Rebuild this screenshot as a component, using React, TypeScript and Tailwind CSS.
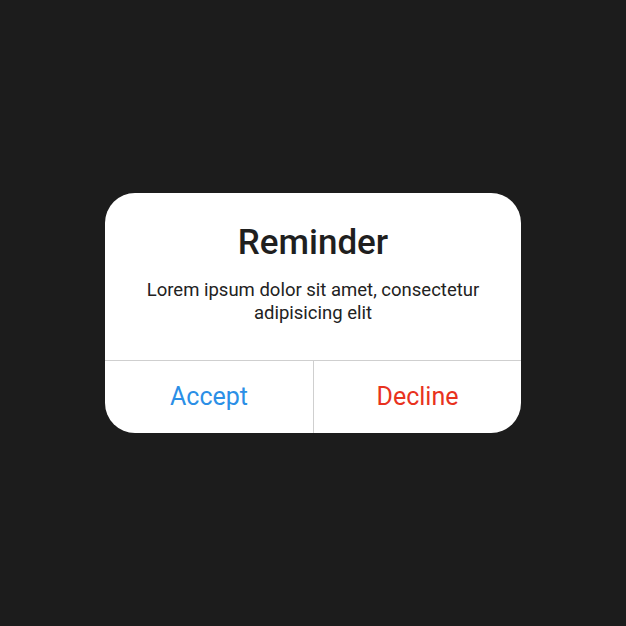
export default function App() {
  return (
    <div className="w-[626px] h-[626px] bg-[#1c1c1c] flex items-center justify-center" style={{ fontFamily: 'Roboto, "Liberation Sans", sans-serif' }}>
      <div className="w-[416px] h-[240px] bg-white rounded-[30px] flex flex-col overflow-hidden">
        <div className="h-[168px] flex flex-col items-center pt-[28px] border-b border-[#cfcfcf]">
          <h1 className="text-[35px] leading-[44px] font-medium text-[#1f1f1f]">Reminder</h1>
          <p className="mt-[14px] text-[18.5px] leading-[23px] text-[#222] text-center">
            Lorem ipsum dolor sit amet, consectetur
            <br />
            adipisicing elit
          </p>
        </div>
        <div className="flex flex-1">
          <button className="w-[209px] border-r border-[#cfcfcf] text-[25px] text-[#2b8fe6]">Accept</button>
          <button className="flex-1 text-[25px] text-[#e8321e]">Decline</button>
        </div>
      </div>
    </div>
  )
}
